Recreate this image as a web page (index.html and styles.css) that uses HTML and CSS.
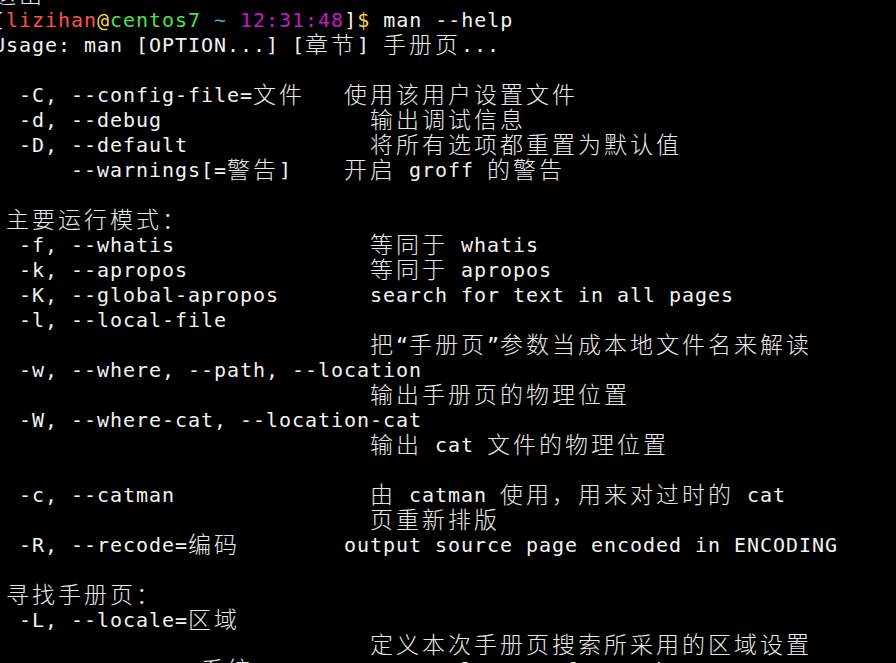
FILE: index.html
```html
<!DOCTYPE html>
<html lang="zh-CN">
<head>
<meta charset="utf-8">
<title>man --help</title>
<link rel="stylesheet" href="styles.css">
</head>
<body>
<div class="term">
<div class="ln"><span class="c">退出</span></div>
<div class="ln">[<span class="u">lizihan</span><span class="y">@</span><span class="g">centos7</span> <span class="b">~</span> <span class="m">12:31:48</span>]<span class="y">$</span> man --help</div>
<div class="ln">Usage: man [OPTION...] [<span class="c">章节</span>] <span class="c">手册页</span>...</div>
<div class="ln"></div>
<div class="ln">  -C, --config-file=<span class="c">文件</span>   <span class="c">使用该用户设置文件</span></div>
<div class="ln">  -d, --debug                <span class="c">输出调试信息</span></div>
<div class="ln">  -D, --default              <span class="c">将所有选项都重置为默认值</span></div>
<div class="ln">      --warnings[=<span class="c">警告</span>]    <span class="c">开启</span> groff <span class="c">的警告</span></div>
<div class="ln"></div>
<div class="ln"> <span class="c">主要运行模式：</span></div>
<div class="ln">  -f, --whatis               <span class="c">等同于</span> whatis</div>
<div class="ln">  -k, --apropos              <span class="c">等同于</span> apropos</div>
<div class="ln">  -K, --global-apropos       search for text in all pages</div>
<div class="ln">  -l, --local-file</div>
<div class="ln">                             <span class="c">把</span>“<span class="c">手册页</span>”<span class="c">参数当成本地文件名来解读</span></div>
<div class="ln">  -w, --where, --path, --location</div>
<div class="ln">                             <span class="c">输出手册页的物理位置</span></div>
<div class="ln">  -W, --where-cat, --location-cat</div>
<div class="ln">                             <span class="c">输出</span> cat <span class="c">文件的物理位置</span></div>
<div class="ln"></div>
<div class="ln">  -c, --catman               <span class="c">由</span> catman <span class="c">使用，用来对过时的</span> cat</div>
<div class="ln">                             <span class="c">页重新排版</span></div>
<div class="ln">  -R, --recode=<span class="c">编码</span>        output source page encoded in ENCODING</div>
<div class="ln"></div>
<div class="ln"> <span class="c">寻找手册页：</span></div>
<div class="ln">  -L, --locale=<span class="c">区域</span></div>
<div class="ln">                             <span class="c">定义本次手册页搜索所采用的区域设置</span></div>
<div class="ln">  -m, --systems=<span class="c">系统</span>       use manual pages from other systems</div>
</div>
</body>
</html>
```
FILE: styles.css
```css
html, body {
  margin: 0;
  padding: 0;
  background: #000000;
  overflow: hidden;
}

body {
  width: 896px;
  height: 663px;
}

.term {
  margin-top: -17px;
  margin-left: -7px;
  font-family: "DejaVu Sans Mono", "Noto Sans CJK SC", monospace;
  font-size: 20px;
  letter-spacing: 0.96px;
  color: #f2f2f2;
}

.ln {
  height: 25px;
  line-height: 25px;
  white-space: pre;
}

.c {
  font-family: "Noto Sans CJK SC", sans-serif;
  font-size: 23px;
  font-weight: 300;
  letter-spacing: 3px;
  line-height: 0;
  vertical-align: -1px;
  color: #e8e8e8;
}

.u { color: #ff4f4f; }
.y { color: #ffd53a; }
.g { color: #4ae34a; }
.b { color: #45a7dc; }
.m { color: #c41bc4; }
```
